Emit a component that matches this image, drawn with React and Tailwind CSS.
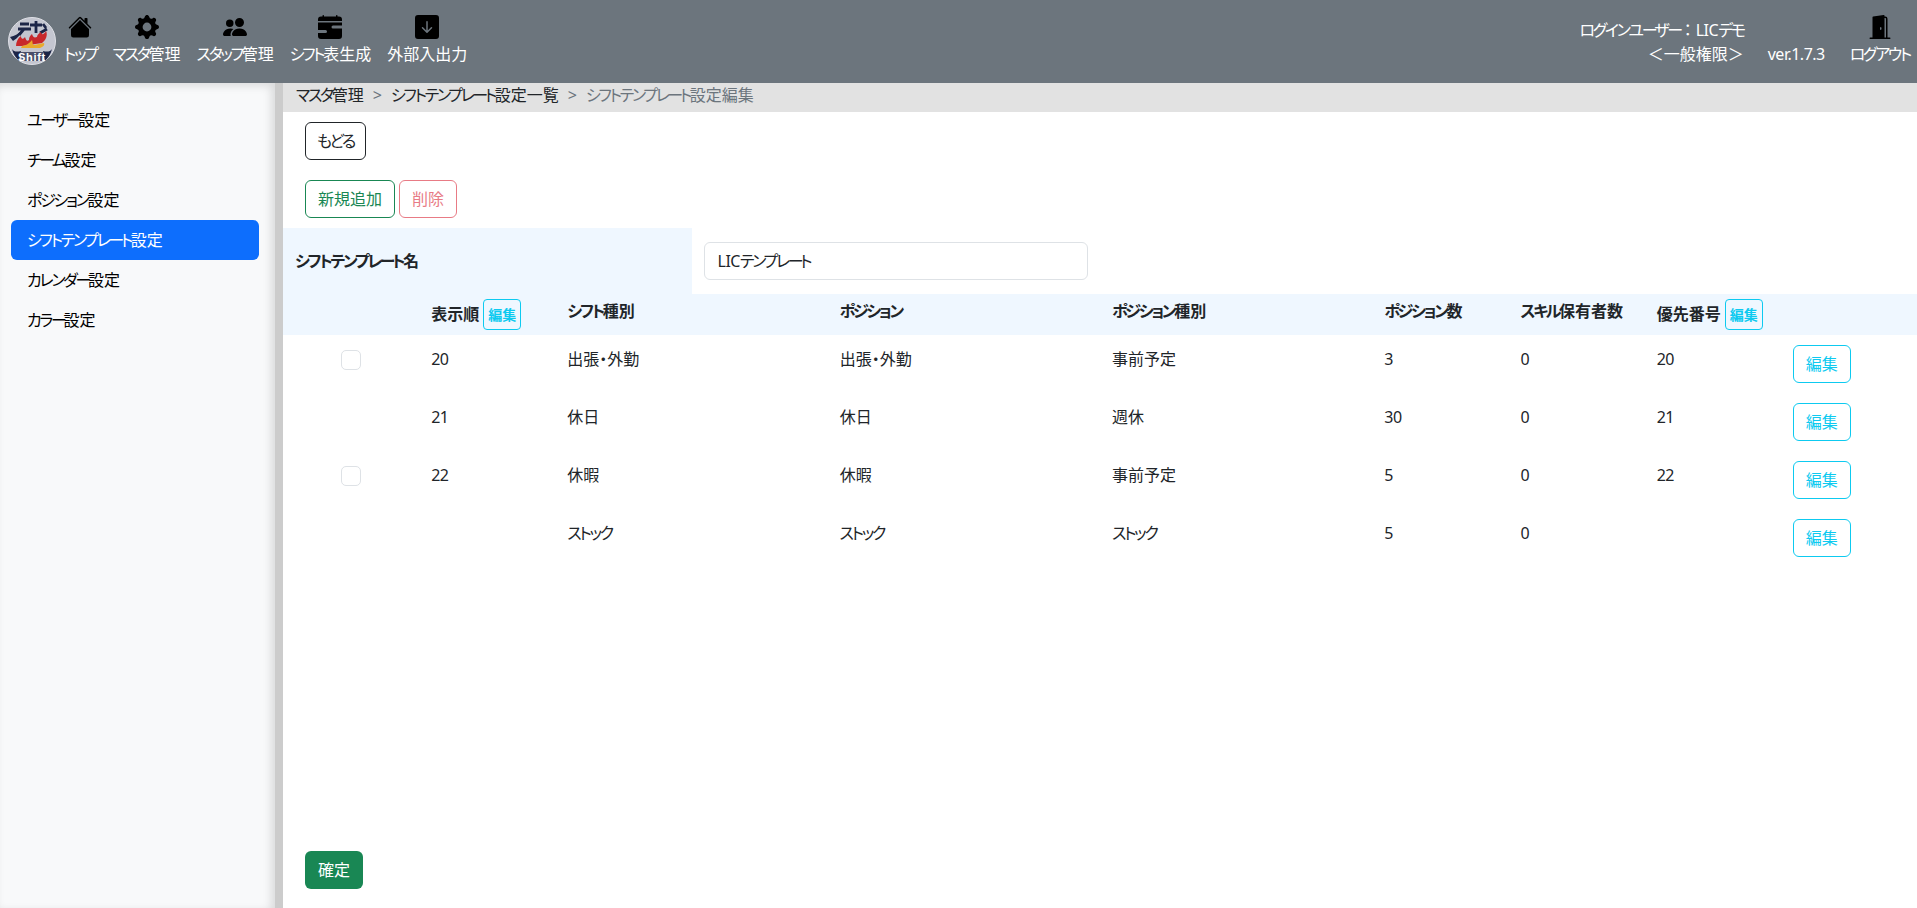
import React from "react";
import { BsHouseFill, BsGearFill, BsPeopleFill, BsCalendarRangeFill, BsArrowDownSquareFill, BsDoorOpenFill } from "react-icons/bs";

function T({ children }) {
  const parts = String(children).split(/(ー+|[\u3041-\u3096\u30A1-\u30FA]+|[A-Za-z0-9.]+|[：＜＞]+)/);
  return (
    <>
      {parts.map((p, i) => {
        if (!p) return null;
        if (/^ー/.test(p)) return <span key={i} className="tracking-[-3.4px]">{p}</span>;
        if (/^[\u3041-\u3096\u30A1-\u30FA]/.test(p)) return <span key={i} className="tracking-[-2.3px]">{p}</span>;
        if (/^[A-Za-z0-9.]/.test(p)) return <span key={i} className="tracking-[-0.5px]">{p}</span>;
        if (/^[：＜＞]/.test(p)) return <span key={i} className="[font-feature-settings:normal]">{p}</span>;
        return <span key={i}>{p}</span>;
      })}
    </>
  );
}

function Logo() {
  return (
    <svg width="48" height="48" viewBox="0 0 48 48" className="shrink-0">
      <circle cx="24" cy="24" r="23.5" fill="#c4c6d0" stroke="#dfe0e6" strokeWidth="1" />
      <path d="M12 7h9M10 12h13M16 12l-5 6M28 4v12M22 8h12M35 7l3 4M39 12l-7 4" stroke="#1c2547" strokeWidth="2.8" fill="none" />
      <path d="M2 20c5-1 8-3 11-6-1 4-3 7-8 10z" fill="#1c2547" />
      <path d="M8 29c0-4 2-8 5-10 0 3 2 4 4 1 1 3 2 5 4 3 0-3 1-4 3-6 1 3 2 4 5 3 0-2 2-4 4-5 0 3 3 3 5-1 2 4 0 9-4 12l-20 3z" fill="#c8282b" />
      <path d="M14 29c3 0 8-3 10-6 1 3 0 4 2 5l10-2c1 2-1 4-4 5H13z" fill="#e8a92c" />
      <path d="M4 32c2 3 5 3 9 2l-2 10c-3-3-6-7-7-12zM44 32c-2 3-5 3-9 2l2 10c3-3 6-7 7-12z" fill="#1c2547" />
      <path d="M12 35h24l-2 9H14z" fill="#4a4f6a" />
      <text x="24" y="43.5" textAnchor="middle" fontSize="11" fontWeight="700" fill="#fff" fontFamily="'Liberation Sans', sans-serif" letterSpacing="0.7">Shift</text>
    </svg>
  );
}

function NavItem({ icon, label }) {
  return (
    <div className="flex flex-col items-center leading-6 text-white">
      <div className="mb-[3px] h-[24px] w-[24px] text-[24px] text-black">{icon}</div>
      <span className="whitespace-nowrap"><T>{label}</T></span>
    </div>
  );
}

function EditBtn({ small }) {
  return small ? (
    <button className="h-[31px] w-[38px] shrink-0 rounded border border-[#0dcaf0] text-[14px] leading-[21px] text-[#0dcaf0]">編集</button>
  ) : (
    <button className="h-[38px] w-[58px] rounded-md border border-[#0dcaf0] text-[#0dcaf0]">編集</button>
  );
}

const rows = [
  { check: true, order: "20", shift: "出張・外勤", pos: "出張・外勤", kind: "事前予定", count: "3", skill: "0", pri: "20" },
  { check: false, order: "21", shift: "休日", pos: "休日", kind: "週休", count: "30", skill: "0", pri: "21" },
  { check: true, order: "22", shift: "休暇", pos: "休暇", kind: "事前予定", count: "5", skill: "0", pri: "22" },
  { check: false, order: "", shift: "ストック", pos: "ストック", kind: "ストック", count: "5", skill: "0", pri: "" },
];

const menu = ["ユーザー設定", "チーム設定", "ポジション設定", "シフトテンプレート設定", "カレンダー設定", "カラー設定"];

export default function App() {
  return (
    <div className="flex h-screen flex-col overflow-hidden bg-white text-[16px] leading-6 text-[#212529] font-['Noto_Sans','Noto_Sans_CJK_JP',sans-serif] [font-feature-settings:'palt']">
      <header className="flex h-[83px] shrink-0 bg-[#6c757d] pr-[7px]">
        <div className="ml-[8px] mt-[17px]"><Logo /></div>
        <nav className="ml-[8px] mt-[15px] flex gap-[16px]">
          <NavItem icon={<BsHouseFill />} label="トップ" />
          <NavItem icon={<BsGearFill />} label="マスタ管理" />
          <NavItem icon={<BsPeopleFill />} label="スタッフ管理" />
          <NavItem icon={<BsCalendarRangeFill />} label="シフト表生成" />
          <NavItem icon={<BsArrowDownSquareFill />} label="外部入出力" />
        </nav>
        <div className="ml-auto mt-[18px] flex flex-col items-end text-white">
          <span><T>ログインユーザー：LICデモ</T></span>
          <span><T>＜一般権限＞</T></span>
        </div>
        <span className="ml-[24px] mt-[42px] text-white"><T>ver.1.7.3</T></span>
        <div className="ml-[25px] mt-[15px]"><NavItem icon={<BsDoorOpenFill />} label="ログアウト" /></div>
      </header>

      <div className="flex min-h-0 flex-1">
        <aside className="w-[275px] shrink-0 bg-[#f8f9fa] pl-[11px] pr-[16px] pt-[17px] shadow-[inset_-4px_3px_8px_rgba(0,0,0,0.12)]">
          {menu.map((m, i) => (
            <div key={m} className={`flex h-[40px] items-center rounded-md px-[16px] ${i === 3 ? "bg-[#0d6efd] text-white" : "text-black"}`}><span><T>{m}</T></span></div>
          ))}
        </aside>
        <div className="w-[8px] shrink-0 bg-[#cccccc]" />
        <main className="flex min-w-0 flex-1 flex-col">
          <div className="flex h-[29px] shrink-0 items-start bg-[#e2e2e2] pl-[13px]">
            <span><T>マスタ管理</T></span>
            <span className="mx-[9px] text-[#6c757d]">&gt;</span>
            <span><T>シフトテンプレート設定一覧</T></span>
            <span className="mx-[9px] text-[#6c757d]">&gt;</span>
            <span className="text-[#6c757d]"><T>シフトテンプレート設定編集</T></span>
          </div>
          <div className="mt-[10px] pl-[22px]">
            <button className="h-[38px] w-[61px] rounded-md border border-[#212529]"><T>もどる</T></button>
          </div>
          <div className="mt-[20px] flex gap-[4px] pl-[22px]">
            <button className="h-[38px] w-[90px] rounded-md border border-[#198754] text-[#198754]">新規追加</button>
            <button className="h-[38px] w-[58px] rounded-md border border-[#dc3545] text-[#dc3545] opacity-65">削除</button>
          </div>

          <div className="mt-[10px] grid grid-cols-12">
            <div className="col-span-3 flex h-[66px] items-center bg-[#eff7ff] px-[12px] font-bold"><span><T>シフトテンプレート名</T></span></div>
            <div className="col-span-3 flex items-center px-[12px]">
              <div className="flex h-[38px] w-full items-center rounded-md border border-[#dee2e6] px-[13px]"><span><T>LICテンプレート</T></span></div>
            </div>
          </div>

          <div className="grid h-[41px] grid-cols-12 bg-[#eff7ff] pt-[5px] font-bold">
            <div />
            <div className="flex items-start gap-[4px] pl-[12px]"><span className="mt-[3px]">表示順</span><EditBtn small /></div>
            <div className="col-span-2 px-[12px]"><T>シフト種別</T></div>
            <div className="col-span-2 px-[12px]"><T>ポジション</T></div>
            <div className="col-span-2 px-[12px]"><T>ポジション種別</T></div>
            <div className="px-[12px]"><T>ポジション数</T></div>
            <div className="whitespace-nowrap px-[12px]"><T>スキル保有者数</T></div>
            <div className="flex items-start gap-[4px] pl-[12px]"><span className="mt-[3px]">優先番号</span><EditBtn small /></div>
            <div />
          </div>

          {rows.map((r, i) => (
            <div key={i} className="grid h-[58px] grid-cols-12">
              <div className="flex justify-center pt-[15px]">
                {r.check && <span className="h-[20px] w-[20px] rounded-[5px] border border-[#dee2e6] bg-white" />}
              </div>
              <div className="px-[12px] pt-[12px]"><T>{r.order}</T></div>
              <div className="col-span-2 px-[12px] pt-[12px]"><T>{r.shift}</T></div>
              <div className="col-span-2 px-[12px] pt-[12px]"><T>{r.pos}</T></div>
              <div className="col-span-2 px-[12px] pt-[12px]"><T>{r.kind}</T></div>
              <div className="px-[12px] pt-[12px]"><T>{r.count}</T></div>
              <div className="px-[12px] pt-[12px]"><T>{r.skill}</T></div>
              <div className="px-[12px] pt-[12px]"><T>{r.pri}</T></div>
              <div className="px-[12px] pt-[10px]"><EditBtn /></div>
            </div>
          ))}

          <div className="mt-auto pb-[19px] pl-[22px]">
            <button className="h-[38px] w-[58px] rounded-md bg-[#198754] text-white">確定</button>
          </div>
        </main>
      </div>
    </div>
  );
}
